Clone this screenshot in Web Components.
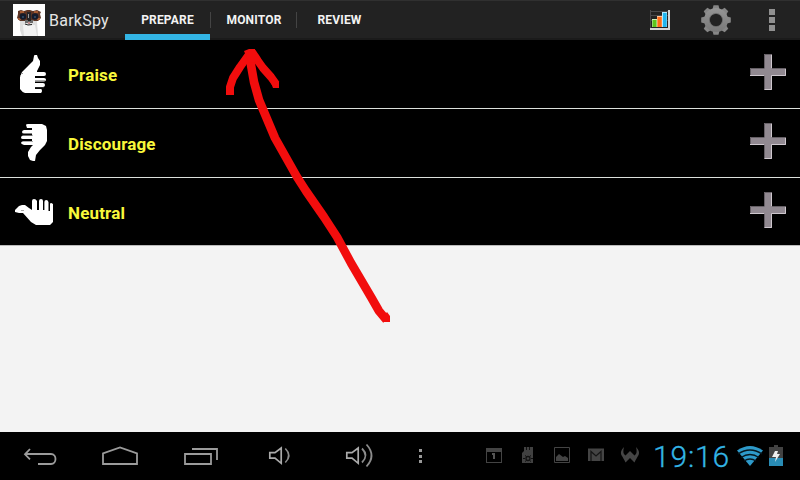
<!DOCTYPE html>
<html lang="en"><head><meta charset="utf-8"><title>BarkSpy</title>
<style>html,body{margin:0;width:800px;height:480px;overflow:hidden;background:#f3f3f3;font-family:Roboto,"Liberation Sans",sans-serif}</style></head>
<body><bark-app></bark-app>
<script>
const define=(name,css,html)=>customElements.define(name,class extends HTMLElement{
  constructor(){super();this.attachShadow({mode:'open'}).innerHTML=`<style>:host{box-sizing:border-box}svg{display:block}${css}</style>${typeof html==='function'?html(this):html}`}
});
const teeth=[0,45,90,135,180,225,270,315].map(a=>`<path d="M712.3 10l1.2-4.8h5l1.2 4.8z" transform="rotate(${a} 716 20)"/>`).join('');
const icons={
dog:['13 4 32 32',`<path fill="#fff" d="M13 4h32v32H13z"/><path fill="#dedede" d="M20 21h17l1 15H22l-2-6z"/><path fill="#f3f3f3" d="M23 25h12l2 11H24z"/><path fill="#5c3424" d="M18 11l3-1 3 1 3-1h3l3 1 4-1 4 2-1 2 1 4-3 3h-4l-2-1h-5l-2 1h-5l-3-3 1-4z"/><path fill="#a35a32" d="M20 11h4v2h-4zM34 11h4v2h-4zM18 18h3v2h-3zM37 18h3v2h-3z"/><circle cx="23" cy="16.5" r="3.3" fill="#141b2b"/><circle cx="35" cy="16.5" r="3.3" fill="#141b2b"/><path fill="#29415c" d="M22 16h2v2h-2zM34 16h2v2h-2z"/><path fill="#252529" d="M27 12h4v9h-4z"/><path fill="#999" d="M28 14h1v4h-1z"/><path fill="#6b6b6b" d="M25 20h8v3h-8z"/><path fill="#222" d="M28 19h3v2h-3z"/><path fill="#c08c8c" d="M28 22h2v2h-2z"/><path d="M25 24l3 1 4-.5" stroke="#222" fill="none"/>`],
chart:['650 8 20 22',`<path d="M650.5 9v19M650 10.5h18M650 14.5h18M650 19.5h18" stroke="#48484a"/><path fill="#d4d4d4" d="M668 9h2v20h-20v-2h18z"/><path fill="#cdeebb" d="M652 18h5v8h-5z"/><path fill="#ffc39a" d="M657 15h5v11h-5z"/><path fill="#b3e7fb" d="M662 11h5v15h-5z"/><path fill="#5dc51d" d="M652.5 19h4v7h-4z"/><path fill="#ff6c16" d="M657.5 16h4.2v10h-4.2z"/><path fill="#20b5ee" d="M663 12h3.6v14H663z"/>`],
gear:['700 4 32 32',`<defs><linearGradient id="g" gradientUnits="userSpaceOnUse" x1="0" y1="5" x2="0" y2="35"><stop stop-color="#999"/><stop offset="1" stop-color="#747474"/></linearGradient><mask id="m"><path fill="#fff" d="M700 4h32v32h-32z"/><circle cx="716" cy="20" r="6.3"/></mask></defs><g fill="#868686" mask="url(#m)">${teeth}<circle cx="716" cy="20" r="12" fill="url(#g)"/></g><circle cx="716" cy="20" r="6.6" fill="none" stroke="#666" stroke-width=".7"/>`],
more:['768 8 8 24','<path fill="#909090" d="M769 9h6v6h-6zM769 17h6v6h-6zM769 25h6v6h-6z"/>'],
plus:['750 54 36 36','<path fill="#918991" d="M764 54h8v14h14v8h-14v14h-8V76h-14v-8h14z"/><path d="M764.5 68v-13.5h7M750.5 75v-6.5h14M764.5 76v13M772 68.5h14" stroke="#655f65" fill="none"/><path d="M771.5 55v13M785.5 69v6.5H771.5V89.5H765M750 75.5h14" stroke="#cec7ce" fill="none"/>'],
praise:['0 40 60 68','<path fill="#fff" d="M34 56q0-1 1-1h2l1 3 2 3v4l-3 6v1h7q2 0 2 2 0 2-2 2h-9v2h9q2 0 2 1.5 0 2-2 2h-9v1.5h8q2 0 2 2t-2 2h-8v2h6q1 0 1 2 0 1-1 2H25q-3-1-5-4V77l2-5 7-7 4-4z"/><path d="M35 80.5h10M35 87.7h9" stroke="#555" stroke-width=".5"/><path fill="#999" d="M20 75h1v1h-1zM22 73h1v1h-1z"/>'],
discourage:['0 109 60 68','<path fill="#fff" d="M26 125q0-1 2-1h14l4 2 1 4v11l-2 4-5 5-4 5-1 6h-2l-3-1-2-4v-4l3-5 2-2h-9q-3-1-3-2t2-2h9v-2h-9q-2 0-2-1.5t2-2h9v-2h-8q-2 0-2-1.5t2-2h8v-2h-5z"/><path d="M22 135.3h11M22 141.5h11" stroke="#555" stroke-width=".5"/>'],
neutral:['0 178 60 67','<path fill="#fff" d="M15 210l2-2 2-2 3-1h3l4 3 3 2v-9q0-2 2-2t3 2v9h2v-9q0-2 2-2t2 2v9h1.4v-8q0-2 1.8-2t2.3 2v9h1.5v-7q0-1 1.3-1l1.7 1v18l-3 3H36l-5-3-8-9h-4l-4-1z"/><path fill="#aaa" d="M21 210h3v1h-3z"/>'],
back:['0 432 80 48','<path d="M30 449l-5 5.3 5 5M25.5 454h25.5c6 0 6 10 0 10H38" fill="none" stroke="#9b9b9b" stroke-width="1.8"/>'],
home:['80 432 80 48','<path d="M103 464V453.5l17-6 17 6V464z" fill="none" stroke="#9b9b9b" stroke-width="1.8"/>'],
recent:['160 432 80 48','<path d="M185 454h26v10h-26zM192 449h25v11" fill="none" stroke="#9b9b9b" stroke-width="1.8"/>'],
low:['240 432 80 48','<path d="M269.8 452.7h5.2l6.2-4.7v15.3l-6.2-5.1h-5.2z" fill="none" stroke="#aaa" stroke-width="1.7"/><path d="M285.3 448.5q7 7 0 14" fill="none" stroke="#8c8c8c" stroke-width="1.6"/>'],
high:['320 432 80 48','<path d="M346.8 452.7h5.2l6.2-4.7v15.3l-6.2-5.1h-5.2z" fill="none" stroke="#aaa" stroke-width="1.7"/><path d="M362 448.5q7 7 0 14M366.5 444.5q10 11 0 22" fill="none" stroke="#8c8c8c" stroke-width="1.8"/>'],
dots:['400 432 40 48','<path fill="#999" d="M419 449h3v3h-3zM419 455h3v3h-3zM419 460h3v3h-3z"/>'],
calendar:['477 432 34 48','<path fill="#444" fill-rule="evenodd" d="M486 448h16v15h-16zm1 4v10h14v-10z"/><path fill="#555" d="M492 453h3v6h-2v-4h-1z"/>'],
android:['511 432 34 48','<path fill="#414141" d="M524 447h9v4h-9zM522 453l2-2h9v12h-11z"/><path d="M526.5 447v3M529.5 447v3" stroke="#111"/><path d="M525 455.5l1.5 1M531 455.5l-1.5 1M523 458.5h2M531 458.5h2M525 461.5l1.5-1M531 461.5l-1.5-1" stroke="#111"/><circle cx="528" cy="458.5" r="2" fill="none" stroke="#111" stroke-width="1.3"/>'],
photo:['545 432 34 48','<path d="M554.5 447.5h15v15h-15z" fill="none" stroke="#444"/><path fill="#444" d="M556 461v-4l3-3 4 3 2-1 3 2v3z"/>'],
mail:['579 432 34 48','<path fill="#444" d="M588 448.5h16V461h-16z"/><path d="M591 461v-9.5l5 4.5 5-4.5v9.5" fill="none" stroke="#161616" stroke-width="1.3"/>'],
wing:['613 432 34 48','<path fill="#454545" d="M624 447c-3 3-4 6-2 9 1 2 2 3 3.5 6.5l4.5-4.5 4.5 4.5c1.5-3.5 2.500-4.5 3.500-6.500 2-3 1-6-2-9 1 4 1 7-1.500 8.500l-4.500-4.500-4.500 4.500c-2.500-1.500-2.500-4.500-1.500-8.500z"/>'],
wifi:['736 444 28 22','<path fill="#2e9aca" d="M737 449.5q13-9 26 0L750 465z"/><path d="M738 453q12-8 24 0M741 456.5q9-6 18 0M744 460q6-4 12 0" fill="none" stroke="#07171f" stroke-width="1.3"/>'],
battery:['768 443 16 24','<path fill="#424242" d="M774 444h4v2h5v11h-14v-11h5z"/><path fill="#298cb5" d="M769 457h14v8h-14z"/><path fill="#eee" d="M775 450h3l-1 3h3l-5 8 1-5h-4z"/>']
};
define('ui-icon',':host{display:block;flex:none}',e=>{const i=icons[e.getAttribute('name')],v=i[0].split(' ');return `<svg width="${v[2]}" height="${v[3]}" viewBox="${i[0]}">${i[1]}</svg>`});
define('tab-item',`:host{display:flex;width:85px;height:40px;align-items:center;justify-content:center;color:#f3f3f3;font:bold 12px/14px Roboto,sans-serif;letter-spacing:.17px}:host([active]){box-shadow:inset 0 -6px #33b5e5}`,'<slot></slot>');
define('app-bar',`:host{display:flex;height:40px;background:linear-gradient(#303030 0 1px,#222 1px 38px,#1b1b1b 38px);align-items:center;padding-left:13px}.title{width:76px;padding-left:4px;box-sizing:border-box;font-size:16px;line-height:20px;color:#e5e5e5;letter-spacing:.24px;padding-top:1px}i{width:1px;height:16px;background:#444}.actions{display:flex;align-items:center;margin-left:auto;padding-right:24px}.actions ui-icon+ui-icon{margin-left:30px}.actions ui-icon:last-child{margin-left:36px}`,
`<ui-icon name="dog"></ui-icon><span class="title">BarkSpy</span><div style="width:4px"></div><tab-item active>PREPARE</tab-item><i></i><tab-item style="padding-left:1px">MONITOR</tab-item><i></i><tab-item>REVIEW</tab-item><div class="actions"><ui-icon name="chart"></ui-icon><ui-icon name="gear"></ui-icon><ui-icon name="more"></ui-icon></div>`);
define('command-row',`:host{display:flex;height:69px;background:#000;border-bottom:1px solid #dce0dc;align-items:center;color:#f8f83b;font:bold 17px/20px Roboto,sans-serif;letter-spacing:.15px}.name{padding-left:8px;padding-top:2px;flex:1}.add{padding-right:14px;padding-bottom:4px}`,e=>`<ui-icon name="${e.getAttribute('icon')}"></ui-icon><span class="name"><slot></slot></span><ui-icon class="add" name="plus"></ui-icon>`);
define('system-bar',`:host{display:flex;height:48px;background:#000;align-items:center}.apps{display:flex;margin-left:37px}.time{font-size:30px;line-height:36px;color:#33b5e5;width:89px;padding-left:6px;box-sizing:border-box;padding-top:2px;font-weight:300;letter-spacing:.8px;-webkit-text-stroke:.3px #33b5e5}.battery{margin-left:4px}`,
`${['back','home','recent','low','high','dots'].map(n=>`<ui-icon name="${n}"></ui-icon>`).join('')}<div class="apps">${['calendar','android','photo','mail','wing'].map(n=>`<ui-icon name="${n}"></ui-icon>`).join('')}</div><span class="time">19:16</span><ui-icon name="wifi"></ui-icon><ui-icon class="battery" name="battery"></ui-icon>`);
define('red-arrow',':host{position:absolute;left:0;top:0;pointer-events:none}',`<svg width="800" height="480" fill="none" stroke="#f20d0d" stroke-linejoin="round"><path stroke-width="8.6" d="M386.5 320L379 311 371 297 351 263 337 237 324 217 306 191 297 177 275 138 267 119 259 100 254 82 251 65 251 52"/><path stroke-width="8" d="M230 94v-7l3-9 7-11 10-14"/><path stroke-width="8" d="M252 52l6 9 5 7 8 9 5 7"/><path fill="#f20d0d" stroke="none" d="M244 51l5-2h6v5l4 1 1 6-11 2zM270 80l9 2v6h-6zM226 87h8v8h-8zM383 317l4-5 3 4v6h-7z"/></svg>`);
define('bark-app',':host{display:flex;flex-direction:column;width:800px;height:480px;background:#f3f3f3;position:relative}main{flex:1}',`<app-bar></app-bar><main><command-row icon="praise">Praise</command-row><command-row icon="discourage">Discourage</command-row><command-row icon="neutral" style="height:68px;border-color:#bbb">Neutral</command-row></main><system-bar></system-bar><red-arrow></red-arrow>`);
</script></body></html>
